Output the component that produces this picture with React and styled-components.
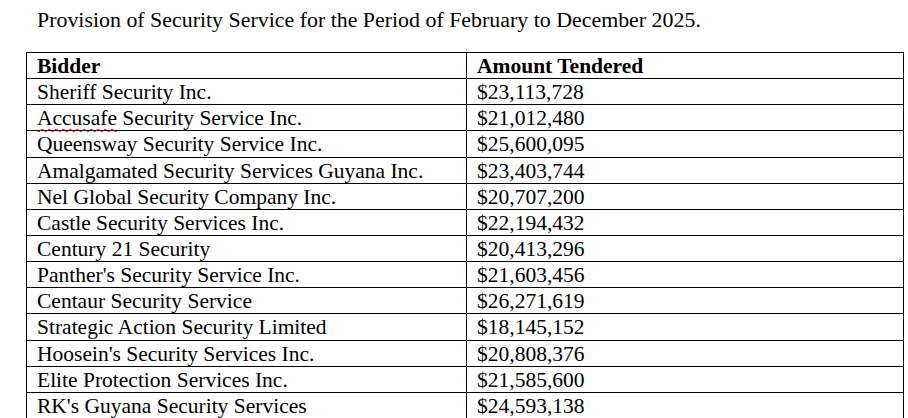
import React from "react";
import styled, { createGlobalStyle } from "styled-components";

const bids = [
  { bidder: "Sheriff Security Inc.", amount: "$23,113,728" },
  { bidder: "Accusafe Security Service Inc.", amount: "$21,012,480", flagged: "Accusafe" },
  { bidder: "Queensway Security Service Inc.", amount: "$25,600,095" },
  { bidder: "Amalgamated Security Services Guyana Inc.", amount: "$23,403,744" },
  { bidder: "Nel Global Security Company Inc.", amount: "$20,707,200" },
  { bidder: "Castle Security Services Inc.", amount: "$22,194,432" },
  { bidder: "Century 21 Security", amount: "$20,413,296" },
  { bidder: "Panther's Security Service Inc.", amount: "$21,603,456" },
  { bidder: "Centaur Security Service", amount: "$26,271,619" },
  { bidder: "Strategic Action Security Limited", amount: "$18,145,152" },
  { bidder: "Hoosein's Security Services Inc.", amount: "$20,808,376" },
  { bidder: "Elite Protection Services Inc.", amount: "$21,585,600" },
  { bidder: "RK's Guyana Security Services", amount: "$24,593,138" },
];

const App = () => {
  return (
    <>
      <GlobalStyle />
      <Page>
        <Title>Provision of Security Service for the Period of February to December 2025.</Title>
        <Table>
          <colgroup>
            <col style={{ width: 440 }} />
            <col style={{ width: 437 }} />
          </colgroup>
          <thead>
            <tr>
              <HeadCell>Bidder</HeadCell>
              <HeadCell>Amount Tendered</HeadCell>
            </tr>
          </thead>
          <tbody>
            {bids.map((row) => (
              <tr key={row.bidder}>
                <Cell>
                  {row.flagged ? (
                    <>
                      <Misspelt>{row.flagged}</Misspelt>
                      {row.bidder.slice(row.flagged.length)}
                    </>
                  ) : (
                    row.bidder
                  )}
                </Cell>
                <Cell>{row.amount}</Cell>
              </tr>
            ))}
          </tbody>
        </Table>
      </Page>
    </>
  );
};

export default App;
// =======================================================================
//                              STYLE
// =======================================================================
const GlobalStyle = createGlobalStyle`
  html, body {
    margin: 0;
    padding: 0;
    background: #fff;
  }
  body {
    font-family: "Liberation Serif", "Times New Roman", serif;
    color: #000;
    overflow: hidden;
  }
`;

const Page = styled.div`
  width: 908px;
  height: 418px;
  padding: 0 0 0 26px;
  box-sizing: border-box;
  overflow: hidden;
`;

const Title = styled.p`
  margin: 0;
  padding: 8px 0 0 11px;
  height: 52px;
  box-sizing: border-box;
  font-size: 21.9px;
  line-height: 24px;
  white-space: nowrap;
`;

const Table = styled.table`
  border-collapse: collapse;
  table-layout: fixed;
  width: 878px;
  font-size: 21.5px;
`;

const Cell = styled.td`
  border: 1px solid #000;
  padding: 1px 10px 0;
  height: 26.15px;
  box-sizing: border-box;
  line-height: 24px;
  white-space: nowrap;
  text-align: left;
`;

const HeadCell = styled(Cell).attrs({ as: "th" })`
  font-weight: bold;
`;

const Misspelt = styled.span`
  text-decoration: underline wavy #e00000;
  text-decoration-thickness: 1px;
  text-underline-offset: 3px;
`;
